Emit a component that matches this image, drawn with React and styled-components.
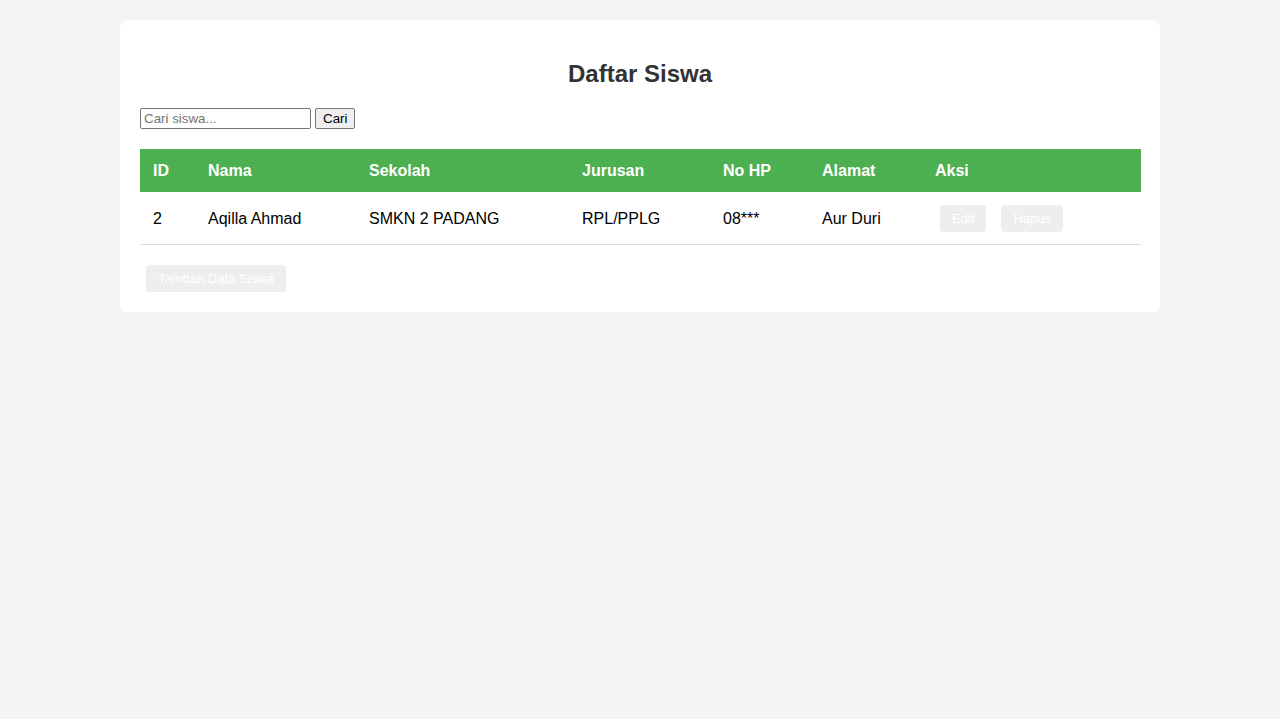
import React, { useState } from 'react'
import styled, { createGlobalStyle } from 'styled-components'

const GlobalStyle = createGlobalStyle`
  body {
    margin: 0;
    background: #f4f4f4;
    font-family: "Liberation Sans", Arial, sans-serif;
  }
`

const Card = styled.div`
  max-width: 1000px;
  margin: 20px auto;
  padding: 20px;
  background: #fff;
  border-radius: 8px;
`

const Title = styled.h2`
  margin: 20px 0;
  text-align: center;
  font-size: 24px;
  line-height: 28px;
  color: #333;
`

const SearchForm = styled.form`
  display: flex;
  align-items: center;
  gap: 4px;
  margin-bottom: 20px;
`

const SearchInput = styled.input`
  box-sizing: border-box;
  width: 171px;
  height: 21px;
  padding: 1px 3px;
  border: 1px solid #767676;
  border-radius: 2px;
  font: 13.33px "Liberation Sans", Arial, sans-serif;
  color: #000;
  &::placeholder {
    color: #757575;
  }
`

const SearchButton = styled.button`
  box-sizing: border-box;
  height: 21px;
  padding: 1px 7px;
  background: #efefef;
  border: 1px solid #767676;
  border-radius: 2px;
  font: 13.33px "Liberation Sans", Arial, sans-serif;
  color: #000;
`

const Table = styled.table`
  width: calc(100% + 1px);
  border-collapse: collapse;
  table-layout: fixed;
  font-size: 16px;
`

const Th = styled.th`
  background: #4caf50;
  color: #fff;
  text-align: left;
  padding: 12px 12px 12px 13px;
  line-height: 19px;
  font-weight: bold;
`

const Td = styled.td`
  padding: 12px 12px 12px 13px;
  line-height: 27px;
  color: #000;
  border-bottom: 1px solid #ddd;
`

const ActionButton = styled.button`
  display: inline-block;
  vertical-align: middle;
  margin: 0 ${(p) => (p.$first ? '5px' : '0')} 0 ${(p) => (p.$first ? '5px' : '10px')};
  padding: 6px 12px;
  line-height: 14px;
  background: #eee;
  color: #fff;
  border: none;
  border-radius: 4px;
  font: 13px "Liberation Sans", Arial, sans-serif;
`

const Footer = styled.div`
  margin-top: 20px;
  padding-left: 6px;
  display: flex;
`

const columns = [
  { label: 'ID', width: 55 },
  { label: 'Nama', width: 161 },
  { label: 'Sekolah', width: 213 },
  { label: 'Jurusan', width: 141 },
  { label: 'No HP', width: 99 },
  { label: 'Alamat', width: 113 },
  { label: 'Aksi', width: 219 },
]

export default function App() {
  const [query, setQuery] = useState('')
  const data = [
    { id: 2, nama: 'Aqilla Ahmad', sekolah: 'SMKN 2 PADANG', jurusan: 'RPL/PPLG', hp: '08***', alamat: 'Aur Duri' },
  ]

  return (
    <>
      <GlobalStyle />
      <Card>
        <Title>Daftar Siswa</Title>
        <SearchForm onSubmit={(e) => e.preventDefault()}>
          <SearchInput
            placeholder="Cari siswa..."
            value={query}
            onChange={(e) => setQuery(e.target.value)}
          />
          <SearchButton type="submit">Cari</SearchButton>
        </SearchForm>
        <Table>
          <colgroup>
            {columns.map((c) => (
              <col key={c.label} style={{ width: c.width }} />
            ))}
          </colgroup>
          <thead>
            <tr>
              {columns.map((c) => (
                <Th key={c.label}>{c.label}</Th>
              ))}
            </tr>
          </thead>
          <tbody>
            {data.map((s) => (
              <tr key={s.id}>
                <Td>{s.id}</Td>
                <Td>{s.nama}</Td>
                <Td>{s.sekolah}</Td>
                <Td>{s.jurusan}</Td>
                <Td>{s.hp}</Td>
                <Td>{s.alamat}</Td>
                <Td>
                  <ActionButton $first>Edit</ActionButton>
                  <ActionButton>Hapus</ActionButton>
                </Td>
              </tr>
            ))}
          </tbody>
        </Table>
        <Footer>
          <ActionButton style={{ margin: 0 }}>Tambah Data Siswa</ActionButton>
        </Footer>
      </Card>
    </>
  )
}
